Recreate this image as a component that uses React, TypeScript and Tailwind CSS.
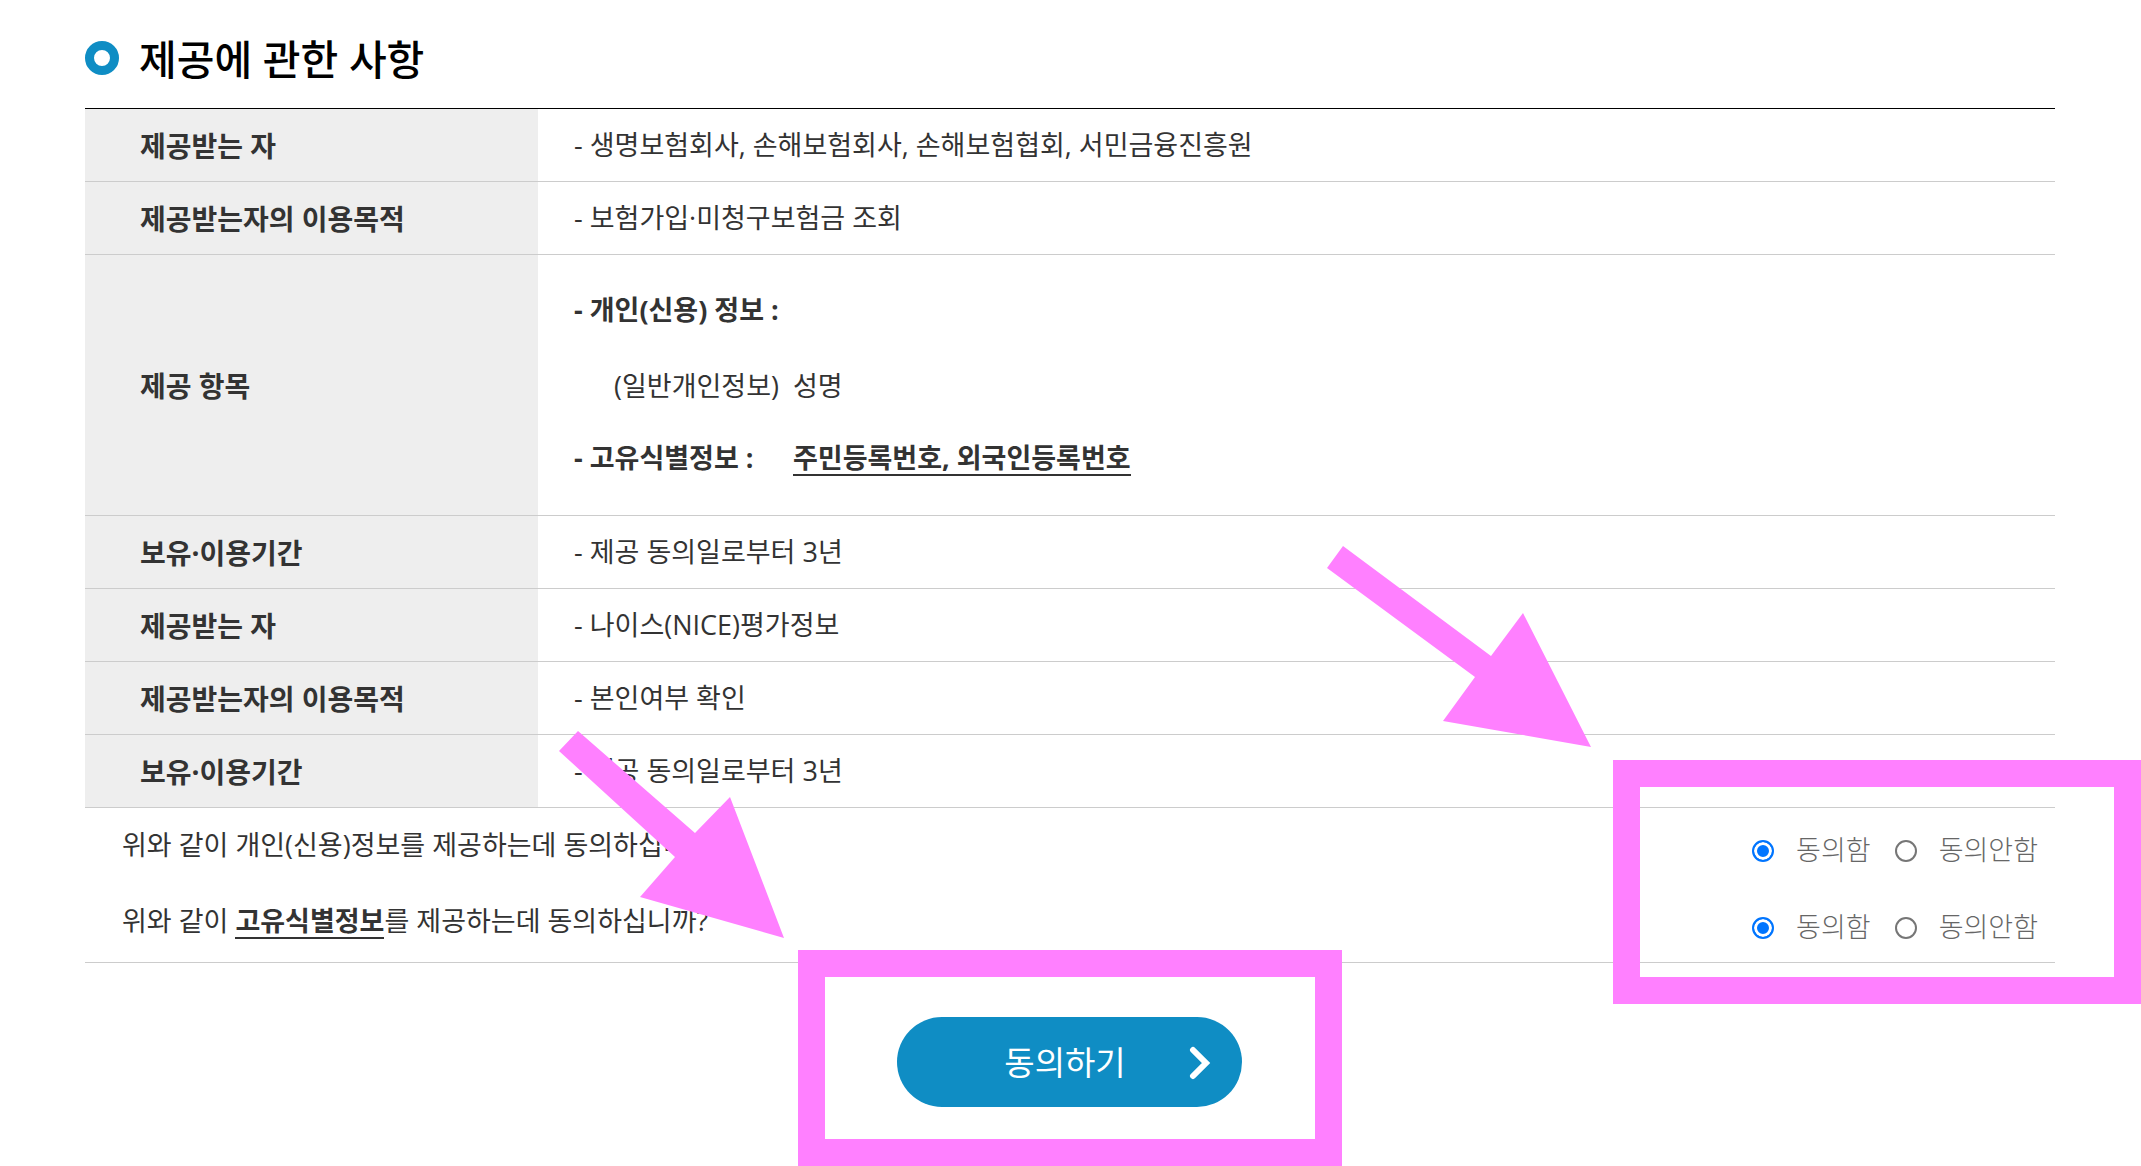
const rows = [
  { label: '제공받는 자', text: '- 생명보험회사, 손해보험회사, 손해보험협회, 서민금융진흥원' },
  { label: '제공받는자의 이용목적', text: '- 보험가입·미청구보험금 조회' },
  { label: '제공 항목', text: '' },
  { label: '보유·이용기간', text: '- 제공 동의일로부터 3년' },
  { label: '제공받는 자', text: '- 나이스(NICE)평가정보' },
  { label: '제공받는자의 이용목적', text: '- 본인여부 확인' },
  { label: '보유·이용기간', text: '- 제공 동의일로부터 3년' },
]

function ProvidedItems() {
  return (
    <div className="py-[39px] leading-8">
      <p className="mb-11 font-bold">- 개인(신용) 정보 :</p>
      <p className="mb-10 flex">
        <span className="w-[219px] pl-10">(일반개인정보)</span>
        <span>성명</span>
      </p>
      <p className="flex font-bold">
        <span className="w-[219px]">- 고유식별정보 :</span>
        <span className="border-b-2 border-[#333]">주민등록번호, 외국인등록번호</span>
      </p>
    </div>
  )
}

const radioClass =
  'size-[22px] appearance-none rounded-full border-2 border-[#767676] checked:border-[#0075ff] checked:bg-[#0075ff] checked:shadow-[inset_0_0_0_3px_white]'

function ConsentChoice({ name }: { name: string }) {
  return (
    <div className="flex items-center gap-6 pt-2 font-light text-[#666]">
      <label className="flex items-center gap-[22px]">
        <input type="radio" name={name} value="agree" defaultChecked className={radioClass} />
        동의함
      </label>
      <label className="flex items-center gap-[22px]">
        <input type="radio" name={name} value="disagree" className={radioClass} />
        동의안함
      </label>
    </div>
  )
}

export default function App() {
  return (
    <main className="overflow-hidden bg-white pt-6 pr-[86px] pb-[59px] pl-[85px] font-['Open_Sans','Noto_Sans_CJK_KR',sans-serif] text-[27px] text-[#333]">
      <div className="flex h-[84px] items-start gap-5">
        <span className="mt-[17px] size-[34px] rounded-full border-[9px] border-[#0f8dc4]" />
        <h1 className="text-[41px] leading-[70px] font-medium text-black">제공에 관한 사항</h1>
      </div>

      <table className="w-full border-separate border-spacing-0 border-t border-black text-left">
        <tbody>
          {rows.map((row, i) => (
            <tr key={i}>
              <th scope="row" className="w-[453px] border-b border-[#ccc] bg-[#eee] pt-0.5 pl-[55px] text-[28px] leading-8 font-bold">
                {row.label}
              </th>
              <td className="h-[73px] border-b border-[#ccc] pl-9 leading-8">{row.text || <ProvidedItems />}</td>
            </tr>
          ))}
        </tbody>
      </table>

      <section className="relative border-b border-[#ccc] pr-[17px] pl-[37px]">
        <div className="flex h-[77px] items-center justify-between">
          <p className="pb-1 leading-8">위와 같이 개인(신용)정보를 제공하는데 동의하십니까?</p>
          <ConsentChoice name="personal" />
        </div>
        <div className="flex h-[77px] items-center justify-between">
          <p className="pb-1 leading-8">
            위와 같이 <strong className="inline-block border-b-2 border-[#333]">고유식별정보</strong>를 제공하는데 동의하십니까?
          </p>
          <ConsentChoice name="identity" />
        </div>

        <div className="pointer-events-none absolute -top-12 -right-[86px] h-[244px] w-[528px] border-[27px] border-[#ff80ff]" />
        <svg aria-hidden="true" viewBox="0 0 264 201" className="pointer-events-none absolute -top-[262px] right-[464px] h-[201px] w-[264px]">
          <path d="M16 0L164 110L196 67L264 201L116 175L148 131L0 22z" fill="#ff80ff" />
        </svg>
      </section>

      <div className="mt-[54px] flex justify-center pr-0.5">
        <div className="relative">
          <button type="button" className="relative flex h-[90px] w-[345px] items-center justify-center rounded-full bg-[#0f8dc4] pt-0.5 pr-2 text-[33px] text-white">
            동의하기
            <svg aria-hidden="true" viewBox="0 0 22 34" className="absolute right-[31px] h-[34px] w-[22px]" fill="none" stroke="currentColor" strokeWidth="6" strokeLinecap="round">
              <path d="M4 4L17 17L4 30" />
            </svg>
          </button>
          <div className="pointer-events-none absolute -top-[67px] -right-[100px] -bottom-[59px] -left-[99px] border-[27px] border-[#ff80ff]" />
          <svg aria-hidden="true" viewBox="0 0 225 207" className="pointer-events-none absolute -top-[286px] -left-[338px] h-[207px] w-[225px]">
            <path d="M19 0L136 102L171 66L225 207L81 166L116 126L0 20z" fill="#ff80ff" />
          </svg>
        </div>
      </div>
    </main>
  )
}
